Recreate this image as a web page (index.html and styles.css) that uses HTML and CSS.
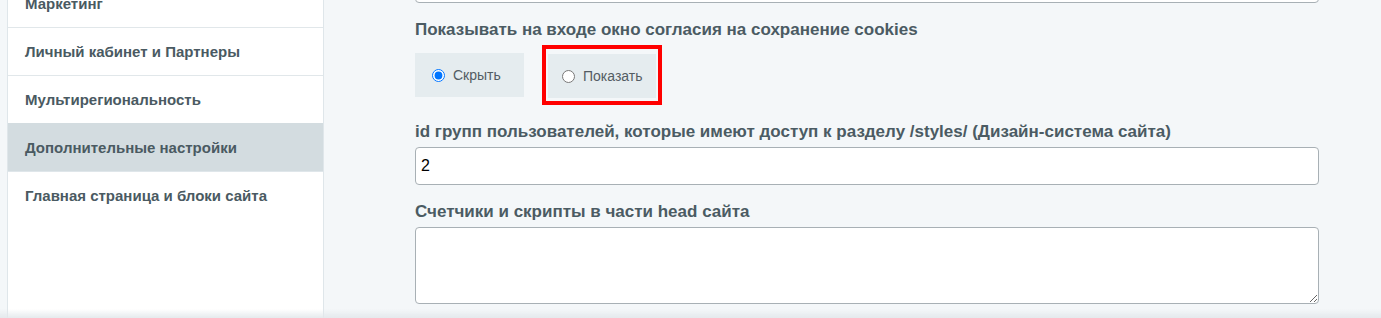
FILE: index.html
```html
<!DOCTYPE html>
<html lang="ru">

<head>
  <meta charset="UTF-8" />
  <meta name="viewport" content="width=device-width, initial-scale=1" />
  <title>Настройки сайта</title>
  <link rel="stylesheet" href="styles.css">
</head>

<body>

  <div class="layout">
    <div class="sidebar">
      <a class="side-item first">Маркетинг</a>
      <a class="side-item">Личный кабинет и Партнеры</a>
      <a class="side-item">Мультирегиональность</a>
      <a class="side-item active">Дополнительные настройки</a>
      <a class="side-item last">Главная страница и блоки сайта</a>
    </div>

    <div class="content">
      <div class="group first-group">
        <input class="field" type="text" value="">
      </div>

      <div class="group">
        <label class="caption">Показывать на входе окно согласия на сохранение cookies</label>
        <div class="choices">
          <label class="choice">
            <input type="radio" name="cookies" checked>
            <span>Скрыть</span>
          </label>
          <div class="marked">
            <label class="choice">
              <input type="radio" name="cookies">
              <span>Показать</span>
            </label>
          </div>
        </div>
      </div>

      <div class="group">
        <label class="caption">id групп пользователей, которые имеют доступ к разделу /styles/ (Дизайн-система сайта)</label>
        <input class="field" type="text" value="2">
      </div>

      <div class="group">
        <label class="caption">Счетчики и скрипты в части head сайта</label>
        <textarea class="field area"></textarea>
      </div>
    </div>
  </div>

  <div class="bottom-shade"></div>

</body>

</html>
```

FILE: styles.css
```css
html,
body {
  margin: 0;
  padding: 0;
  height: 100%;
  background: #f4f7f9;
  font-family: 'Liberation Sans', Arial, sans-serif;
  overflow: hidden;
}

.layout {
  display: flex;
  min-height: 100vh;
}

.sidebar {
  width: 315px;
  margin-left: 7px;
  margin-top: -20px;
  background: #ffffff;
  border-left: 1px solid #dfe6ea;
  border-right: 1px solid #dfe6ea;
  display: flex;
  flex-direction: column;
}

.side-item {
  display: flex;
  align-items: center;
  height: 47px;
  padding-left: 17px;
  border-bottom: 1px solid #e1e7ea;
  color: #4a5a62;
  font-size: 15px;
  font-weight: bold;
  cursor: pointer;
}

.side-item.active {
  background: #d3dce0;
  border-bottom-color: #dfe6ea;
  margin-top: -1px;
  height: 48px;
}

.side-item.last {
  border-bottom: none;
}

.content {
  flex: 1;
  padding-left: 91px;
  padding-right: 62px;
}

.group {
  margin-bottom: 17px;
}

.first-group {
  margin-top: -35px;
}

.caption {
  display: block;
  height: 20px;
  line-height: 20px;
  margin-bottom: 5px;
  color: #4b5b63;
  font-size: 17px;
  font-weight: bold;
}

.field {
  display: block;
  box-sizing: border-box;
  width: 100%;
  height: 38px;
  padding: 0 5px;
  border: 1px solid #a8b0b5;
  border-radius: 4px;
  background: #ffffff;
  font-family: 'Liberation Sans', Arial, sans-serif;
  font-size: 16px;
  color: #000000;
  outline: none;
}

.group .caption + .field {
  margin-top: 2px;
}

.area {
  height: 77px;
  resize: vertical;
}

.choices {
  display: flex;
  align-items: center;
  height: 60px;
}

.choice {
  display: flex;
  align-items: center;
  gap: 8px;
  box-sizing: border-box;
  width: 109px;
  height: 44px;
  padding-left: 17px;
  background: #e5ecef;
  color: #535c63;
  font-size: 14px;
  cursor: pointer;
}

.choice input {
  margin: 0;
  width: 13px;
  height: 13px;
}

.marked {
  margin-left: 18px;
  border: 4px solid #ff0000;
  padding: 5px 2px 3px 2px;
}

.marked .choice {
  width: 108px;
  padding-left: 14px;
}

.bottom-shade {
  position: fixed;
  left: 0;
  right: 0;
  bottom: 0;
  height: 9px;
  background: linear-gradient(to bottom, rgba(226, 232, 235, 0), rgba(226, 232, 235, 0.9));
  pointer-events: none;
}
```
